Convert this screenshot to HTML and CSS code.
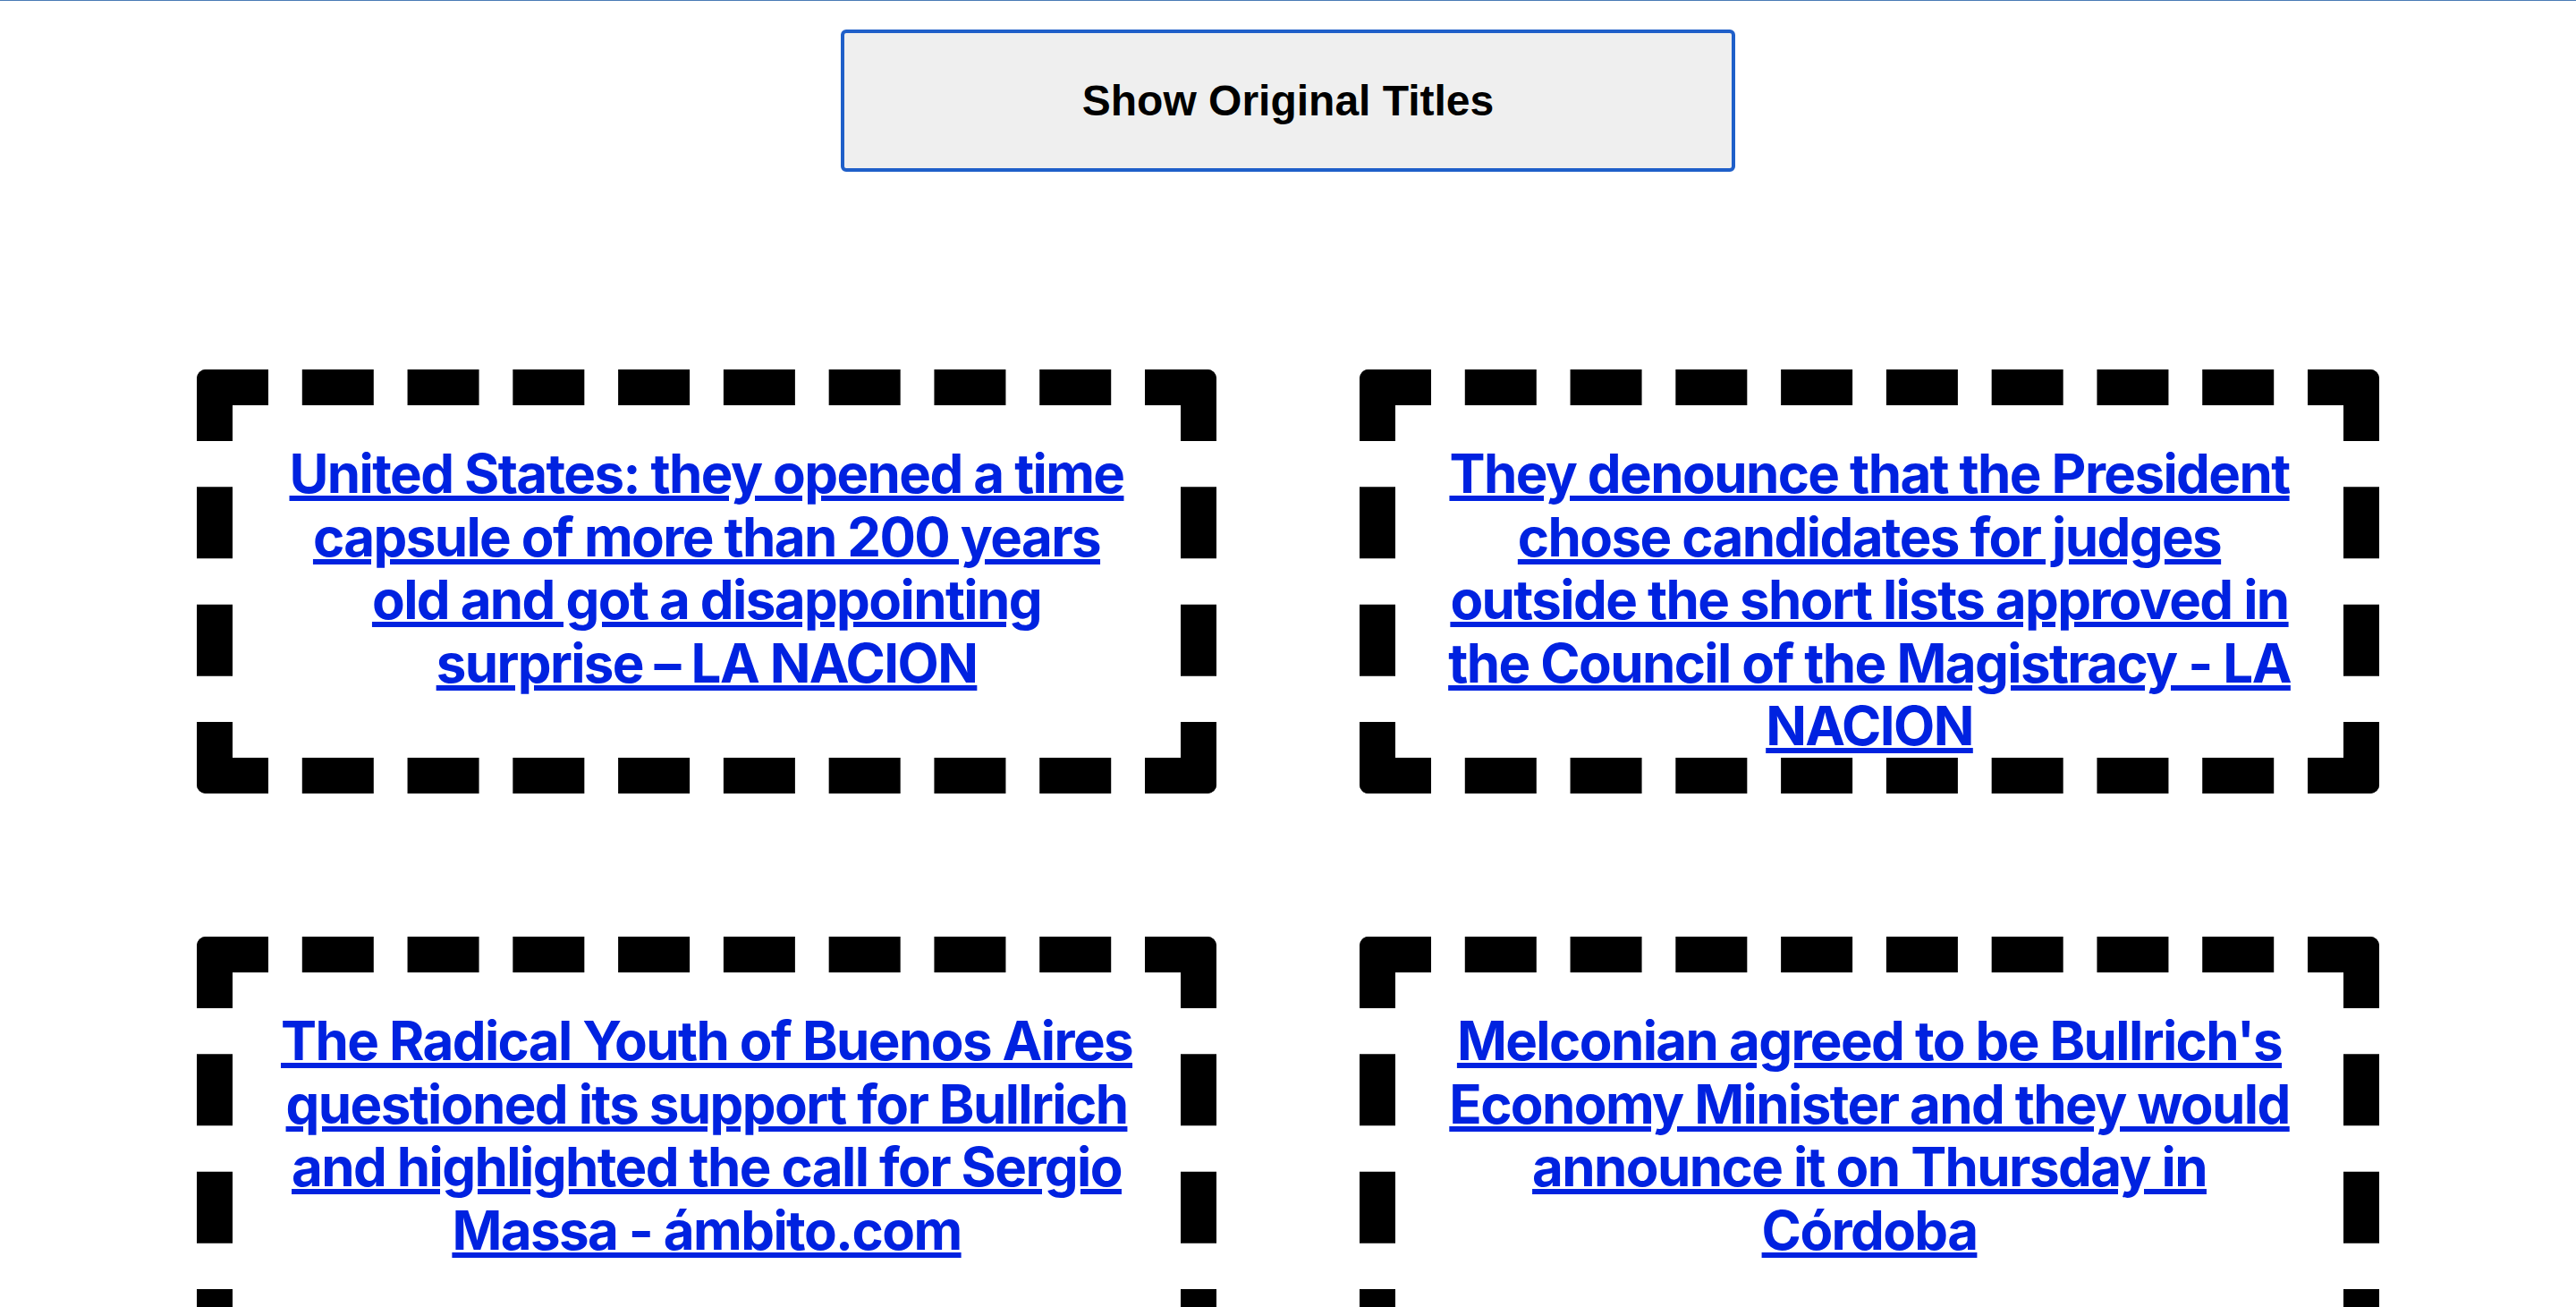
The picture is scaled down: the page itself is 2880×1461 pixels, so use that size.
FILE: index.html
```html
<!DOCTYPE html>
<html lang="en">
<head>
<meta charset="utf-8">
<title>News Titles</title>
<link rel="stylesheet" href="styles.css">
</head>
<body>
<div class="topline"></div>
<div class="toolbar">
  <button class="toggle" type="button">Show Original Titles</button>
</div>
<main class="grid">
  <div class="card"><a class="title" href="#">United States: they opened a time capsule of more than 200 years old and got a disappointing surprise – LA NACION</a></div>
  <div class="card"><a class="title" href="#">They denounce that the President chose candidates for judges outside the short lists approved in the Council of the Magistracy - LA NACION</a></div>
  <div class="card"><a class="title" href="#">The Radical Youth of Buenos Aires questioned its support for Bullrich and highlighted the call for Sergio Massa - ámbito.com</a></div>
  <div class="card"><a class="title" href="#">Melconian agreed to be Bullrich's Economy Minister and they would announce it on Thursday in Córdoba</a></div>
</main>
</body>
</html>
```
FILE: styles.css
```css
html, body {
  margin: 0;
  padding: 0;
  background: #ffffff;
}

.topline {
  height: 1px;
  background: #4a7bb5;
}

.toolbar {
  display: flex;
  justify-content: center;
  padding-top: 32px;
}

.toggle {
  width: 1000px;
  height: 159px;
  box-sizing: border-box;
  border: 4px solid #1f5fc9;
  border-radius: 6px;
  background: #efefef;
  color: #000000;
  font-family: "Liberation Sans", Arial, sans-serif;
  font-weight: 700;
  font-size: 48px;
  cursor: pointer;
}

.grid {
  display: grid;
  grid-template-columns: 1140px 1140px;
  grid-auto-rows: 1fr;
  column-gap: 160px;
  row-gap: 160px;
  padding: 0 220px 160px;
  margin-top: 221px;
}

.card {
  border: 40px dashed #000000;
  border-radius: 10px;
  padding: 41px 47px 0;
  text-align: center;
}

.title {
  font-family: Inter, "Noto Sans", sans-serif;
  font-weight: 700;
  font-size: 60px;
  line-height: 70.6px;
  letter-spacing: -1.6px;
  color: #0022e0;
  text-decoration: underline;
  text-decoration-thickness: 6px;
  text-underline-offset: 3px;
}
```
